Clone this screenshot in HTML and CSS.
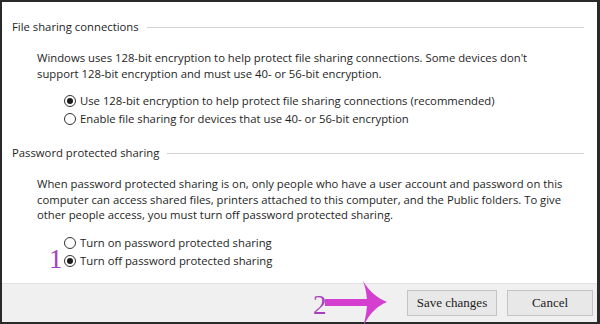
FILE: index.html
```html
<!DOCTYPE html>
<html>
<head>
<meta charset="utf-8">
<link rel="stylesheet" href="styles.css">
</head>
<body>
<div class="window">
  <div class="content">
    <div class="section-head"><span>File sharing connections</span><i class="rule"></i></div>
    <p class="desc narrow">Windows uses 128-bit encryption to help protect file sharing connections. Some devices don't support 128-bit encryption and must use 40- or 56-bit encryption.</p>
    <div class="options">
      <label class="opt"><span class="radio checked"></span>Use 128-bit encryption to help protect file sharing connections (recommended)</label>
      <label class="opt"><span class="radio"></span>Enable file sharing for devices that use 40- or 56-bit encryption</label>
    </div>
    <div class="section-head second"><span>Password protected sharing</span><i class="rule"></i></div>
    <p class="desc">When password protected sharing is on, only people who have a user account and password on this computer can access shared files, printers attached to this computer, and the Public folders. To give other people access, you must turn off password protected sharing.</p>
    <div class="options">
      <label class="opt"><span class="radio"></span>Turn on password protected sharing</label>
      <label class="opt marked"><span class="num one">1</span><span class="radio checked"></span>Turn off password protected sharing</label>
    </div>
  </div>
  <div class="footer">
    <div class="annot">
      <span class="num two">2</span>
      <svg class="arrow" width="64" height="46" viewBox="0 0 64 46">
        <rect x="0" y="18" width="46" height="7" fill="#d43fd0"/>
        <path d="M38 0 C44 10 52 17 62 21 C52 25 44 33 38 46 C41 36 42 28 42 22 C42 15 41 8 38 0 Z" fill="#d43fd0"/>
      </svg>
    </div>
    <button class="btn">Save changes</button>
    <button class="btn">Cancel</button>
  </div>
</div>
</body>
</html>
```
FILE: styles.css
```css
html, body { margin: 0; padding: 0; }
body { width: 600px; height: 324px; background: #fff; }
.window {
  box-sizing: border-box;
  width: 600px;
  height: 324px;
  border: 2px solid #2a2a2a;
  border-right-width: 3px;
  display: flex;
  flex-direction: column;
  font-family: "Open Sans", "Noto Sans", sans-serif;
  font-size: 11.3px;
  color: #1e1e1e;
}
.content { flex: 1; padding: 17px 13px 0 10px; }
.section-head { display: flex; align-items: center; gap: 8px; line-height: 16px; }
.section-head.second { margin-top: 17px; }
.rule { flex: 1; height: 1px; background: #d2d2d2; }
.desc { margin: 15px 10px 0 25px; line-height: 15.5px; }
.desc.narrow { margin-right: 40px; }
.options { margin: 11px 0 0 52px; }
.opt { display: flex; align-items: center; line-height: 18px; position: relative; }
.radio {
  box-sizing: border-box;
  width: 12px; height: 12px;
  border: 1px solid #333;
  border-radius: 50%;
  margin-right: 4px;
  display: flex; align-items: center; justify-content: center;
  background: #fff;
}
.radio.checked::after { content: ""; width: 6px; height: 6px; border-radius: 50%; background: #1a1a1a; }
.num { font-family: "Liberation Serif", serif; color: #a63fbf; position: absolute; }
.one { font-size: 27px; left: -15px; top: -6px; line-height: 27px; }
.footer {
  height: 38px;
  background: #f0f0f0;
  border-top: 1px solid #e2e2e2;
  display: flex;
  align-items: center;
  justify-content: flex-end;
  padding: 0 4px 0 0;
  gap: 10px;
}
.annot { position: relative; width: 80px; height: 38px; margin-right: 8px; }
.two { font-size: 27px; left: 4px; top: 6px; line-height: 30px; }
.arrow { position: absolute; left: 16px; top: -3px; }
.btn {
  font-family: "Liberation Serif", serif;
  font-size: 13px;
  color: #222;
  height: 26px;
  background: #e8e8e8;
  border: 1px solid #c4c4c4;
  padding: 0;
}
.btn:first-of-type { width: 90px; }
.btn:last-of-type { width: 86px; }
```
